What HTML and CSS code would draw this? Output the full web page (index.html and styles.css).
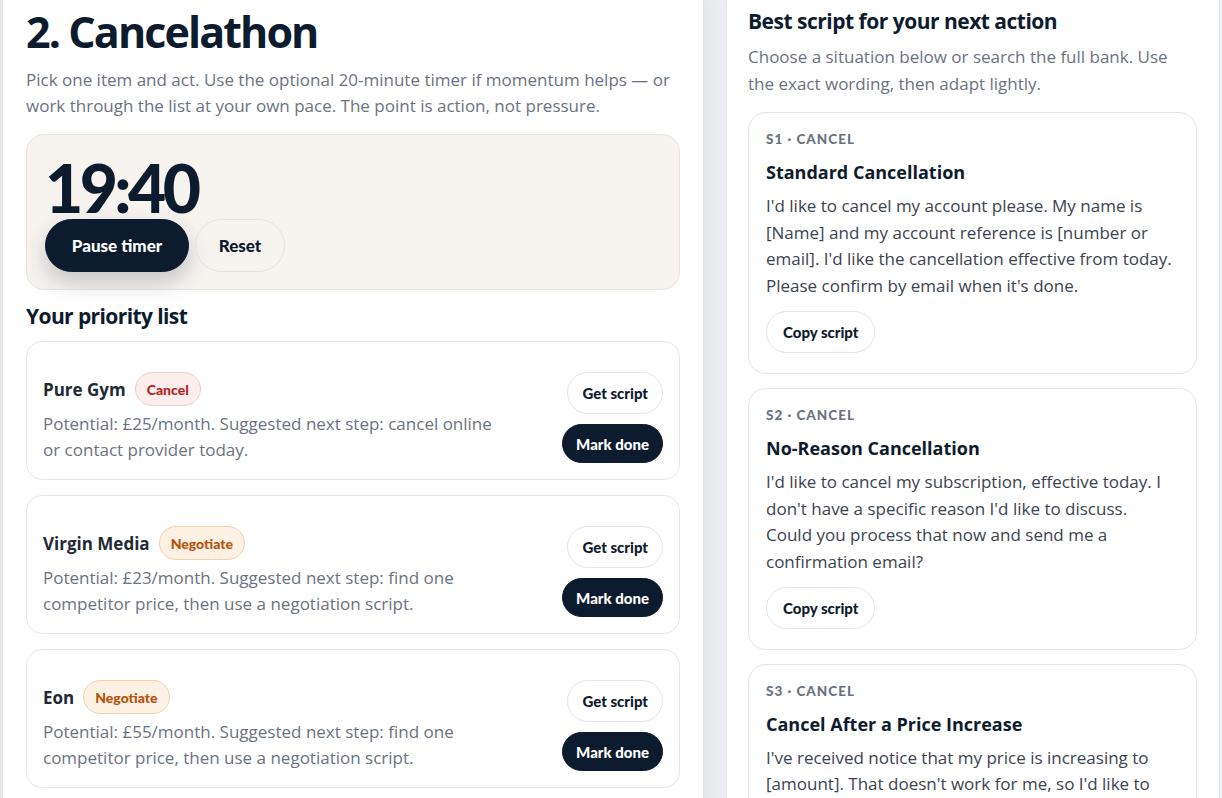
FILE: index.html
```html
<!DOCTYPE html>
<html lang="en">
<head>
<meta charset="utf-8">
<title>Cancelathon</title>
<link rel="stylesheet" href="styles.css">
</head>
<body>
<div class="page">
  <section class="panel panel-main">
    <h1 class="title">2. Cancelathon</h1>
    <p class="lead">Pick one item and act. Use the optional 20-minute timer if momentum helps — or work through the list at your own pace. The point is action, not pressure.</p>

    <div class="timer">
      <div class="timer-digits">19:40</div>
      <div class="timer-actions">
        <button class="btn btn-dark btn-lg">Pause timer</button>
        <button class="btn btn-ghost btn-lg">Reset</button>
      </div>
    </div>

    <h2 class="section-title">Your priority list</h2>
    <div class="list">
      <div class="item">
        <div class="item-main">
          <div class="item-head">
            <span class="item-name">Pure Gym</span>
            <span class="badge badge-cancel">Cancel</span>
          </div>
          <p class="item-desc">Potential: £25/month. Suggested next step: cancel online or contact provider today.</p>
        </div>
        <div class="item-actions">
          <button class="btn btn-outline">Get script</button>
          <button class="btn btn-dark btn-sm">Mark done</button>
        </div>
      </div>
      <div class="item">
        <div class="item-main">
          <div class="item-head">
            <span class="item-name">Virgin Media</span>
            <span class="badge badge-neg">Negotiate</span>
          </div>
          <p class="item-desc">Potential: £23/month. Suggested next step: find one competitor price, then use a negotiation script.</p>
        </div>
        <div class="item-actions">
          <button class="btn btn-outline">Get script</button>
          <button class="btn btn-dark btn-sm">Mark done</button>
        </div>
      </div>
      <div class="item">
        <div class="item-main">
          <div class="item-head">
            <span class="item-name">Eon</span>
            <span class="badge badge-neg">Negotiate</span>
          </div>
          <p class="item-desc">Potential: £55/month. Suggested next step: find one competitor price, then use a negotiation script.</p>
        </div>
        <div class="item-actions">
          <button class="btn btn-outline">Get script</button>
          <button class="btn btn-dark btn-sm">Mark done</button>
        </div>
      </div>
    </div>
  </section>

  <aside class="panel panel-side">
    <h2 class="side-title">Best script for your next action</h2>
    <p class="side-lead">Choose a situation below or search the full bank. Use the exact wording, then adapt lightly.</p>
    <div class="scripts">
      <article class="script">
        <div class="script-tag">S1 · CANCEL</div>
        <h3 class="script-title">Standard Cancellation</h3>
        <p class="script-body">I'd like to cancel my account please. My name is [Name] and my account reference is [number or email]. I'd like the cancellation effective from today. Please confirm by email when it's done.</p>
        <button class="btn btn-outline btn-copy">Copy script</button>
      </article>
      <article class="script">
        <div class="script-tag">S2 · CANCEL</div>
        <h3 class="script-title">No-Reason Cancellation</h3>
        <p class="script-body">I'd like to cancel my subscription, effective today. I don't have a specific reason I'd like to discuss. Could you process that now and send me a confirmation email?</p>
        <button class="btn btn-outline btn-copy">Copy script</button>
      </article>
      <article class="script">
        <div class="script-tag">S3 · CANCEL</div>
        <h3 class="script-title">Cancel After a Price Increase</h3>
        <p class="script-body">I've received notice that my price is increasing to [amount]. That doesn't work for me, so I'd like to cancel my account effective today. Please confirm by email.</p>
        <button class="btn btn-outline btn-copy">Copy script</button>
      </article>
    </div>
  </aside>
</div>
</body>
</html>
```

FILE: styles.css
```css
* { box-sizing: border-box; }

html, body {
  margin: 0;
  padding: 0;
}

body {
  background: #eceef1;
  font-family: "Open Sans", "Noto Sans", sans-serif;
  color: #0d1b2e;
  overflow: hidden;
}

.page {
  display: grid;
  grid-template-columns: 702px 494px;
  column-gap: 22px;
  align-items: start;
  padding: 0 2px;
  margin-top: -22px;
}

.panel {
  background: #fff;
  border: 1px solid #e3e5e8;
  border-radius: 22px;
}

.panel-main {
  padding: 23px 23px 40px;
  box-shadow: 0 8px 24px rgba(15, 23, 42, 0.07);
}

.panel-side {
  padding: 28px 22px 40px 21px;
}

.title {
  margin: 0;
  font-size: 43px;
  line-height: 60px;
  font-weight: 700;
  letter-spacing: -1.9px;
  color: #0d1b2e;
}

.lead {
  margin: 5px 0 0;
  font-size: 17px;
  line-height: 26px;
  color: #6b7280;
}

.timer {
  margin-top: 15px;
  background: #f7f4f0;
  border: 1px solid #e8e3dd;
  border-radius: 18px;
  padding: 22px 18px 17px;
}

.timer-digits {
  font-family: Lato, "Open Sans", sans-serif;
  font-weight: 900;
  font-size: 66px;
  line-height: 62px;
  letter-spacing: -3.6px;
  color: #0d1b2e;
}

.timer-actions {
  display: flex;
  gap: 6px;
}

.btn {
  font-family: Lato, "Open Sans", sans-serif;
  font-weight: 900;
  border-radius: 999px;
  cursor: pointer;
  color: #0d1b2e;
}

.btn-lg {
  height: 53px;
  padding: 0 18px;
  font-size: 17px;
}

.btn-dark {
  background: #0d1b2e;
  border: 1px solid #0d1b2e;
  color: #fff;
}

.btn-dark.btn-lg {
  box-shadow: 0 10px 22px rgba(13, 27, 46, 0.22);
  width: 144px;
}

.btn-ghost {
  background: transparent;
  border: 1px solid #e5e0da;
  width: 90px;
}

.section-title {
  margin: 12px 0 11px;
  font-size: 21px;
  line-height: 28px;
  font-weight: 700;
  letter-spacing: -0.6px;
  color: #0d1b2e;
}

.list {
  display: flex;
  flex-direction: column;
  gap: 15px;
}

.item {
  display: flex;
  justify-content: space-between;
  align-items: center;
  border: 1px solid #e5e7eb;
  border-radius: 16px;
  padding: 30px 16px 16px 16px;
}

.item-head {
  display: flex;
  align-items: center;
  gap: 9px;
}

.item-name {
  font-size: 17px;
  font-weight: 700;
  color: #222a36;
}

.badge {
  font-family: Lato, "Open Sans", sans-serif;
  display: inline-flex;
  align-items: center;
  height: 34px;
  padding: 0 11px;
  border-radius: 999px;
  font-size: 14px;
  font-weight: 900;
}

.badge-cancel {
  background: #fdeeee;
  border: 1px solid #f3cccc;
  color: #b3261e;
}

.badge-neg {
  background: #fdf1e3;
  border: 1px solid #f1d2ae;
  color: #b4530c;
}

.item-desc {
  margin: 5px 0 0;
  max-width: 462px;
  font-size: 17px;
  line-height: 26px;
  color: #6b7280;
}

.item-actions {
  display: flex;
  flex-direction: column;
  align-items: flex-end;
  gap: 10px;
}

.btn-outline {
  background: #fff;
  border: 1px solid #e3e5e8;
  height: 42px;
  padding: 0 14px;
  font-size: 15px;
}

.btn-sm {
  height: 39px;
  padding: 0 13px;
  font-size: 15px;
}

.side-title {
  margin: 0;
  font-size: 21px;
  line-height: 28px;
  font-weight: 700;
  letter-spacing: -0.5px;
  color: #0d1b2e;
}

.side-lead {
  margin: 8px 0 0;
  max-width: 430px;
  font-size: 17px;
  line-height: 27px;
  color: #6b7280;
}

.scripts {
  margin-top: 15px;
  display: flex;
  flex-direction: column;
  gap: 14px;
}

.script {
  border: 1px solid #e3e5e8;
  border-radius: 18px;
  padding: 17px 21px 20px 17px;
}

.script-tag {
  font-family: Lato, "Open Sans", sans-serif;
  font-size: 13.5px;
  font-weight: 900;
  letter-spacing: 1px;
  color: #6b7280;
  line-height: 18px;
}

.script-title {
  margin: 12px 0 0;
  font-size: 18px;
  line-height: 24px;
  font-weight: 700;
  color: #0d1b2e;
}

.script-body {
  margin: 9px 0 0;
  font-size: 17px;
  line-height: 26.7px;
  color: #3b4350;
}

.btn-copy {
  margin-top: 11px;
  padding: 0 16px;
}
```
